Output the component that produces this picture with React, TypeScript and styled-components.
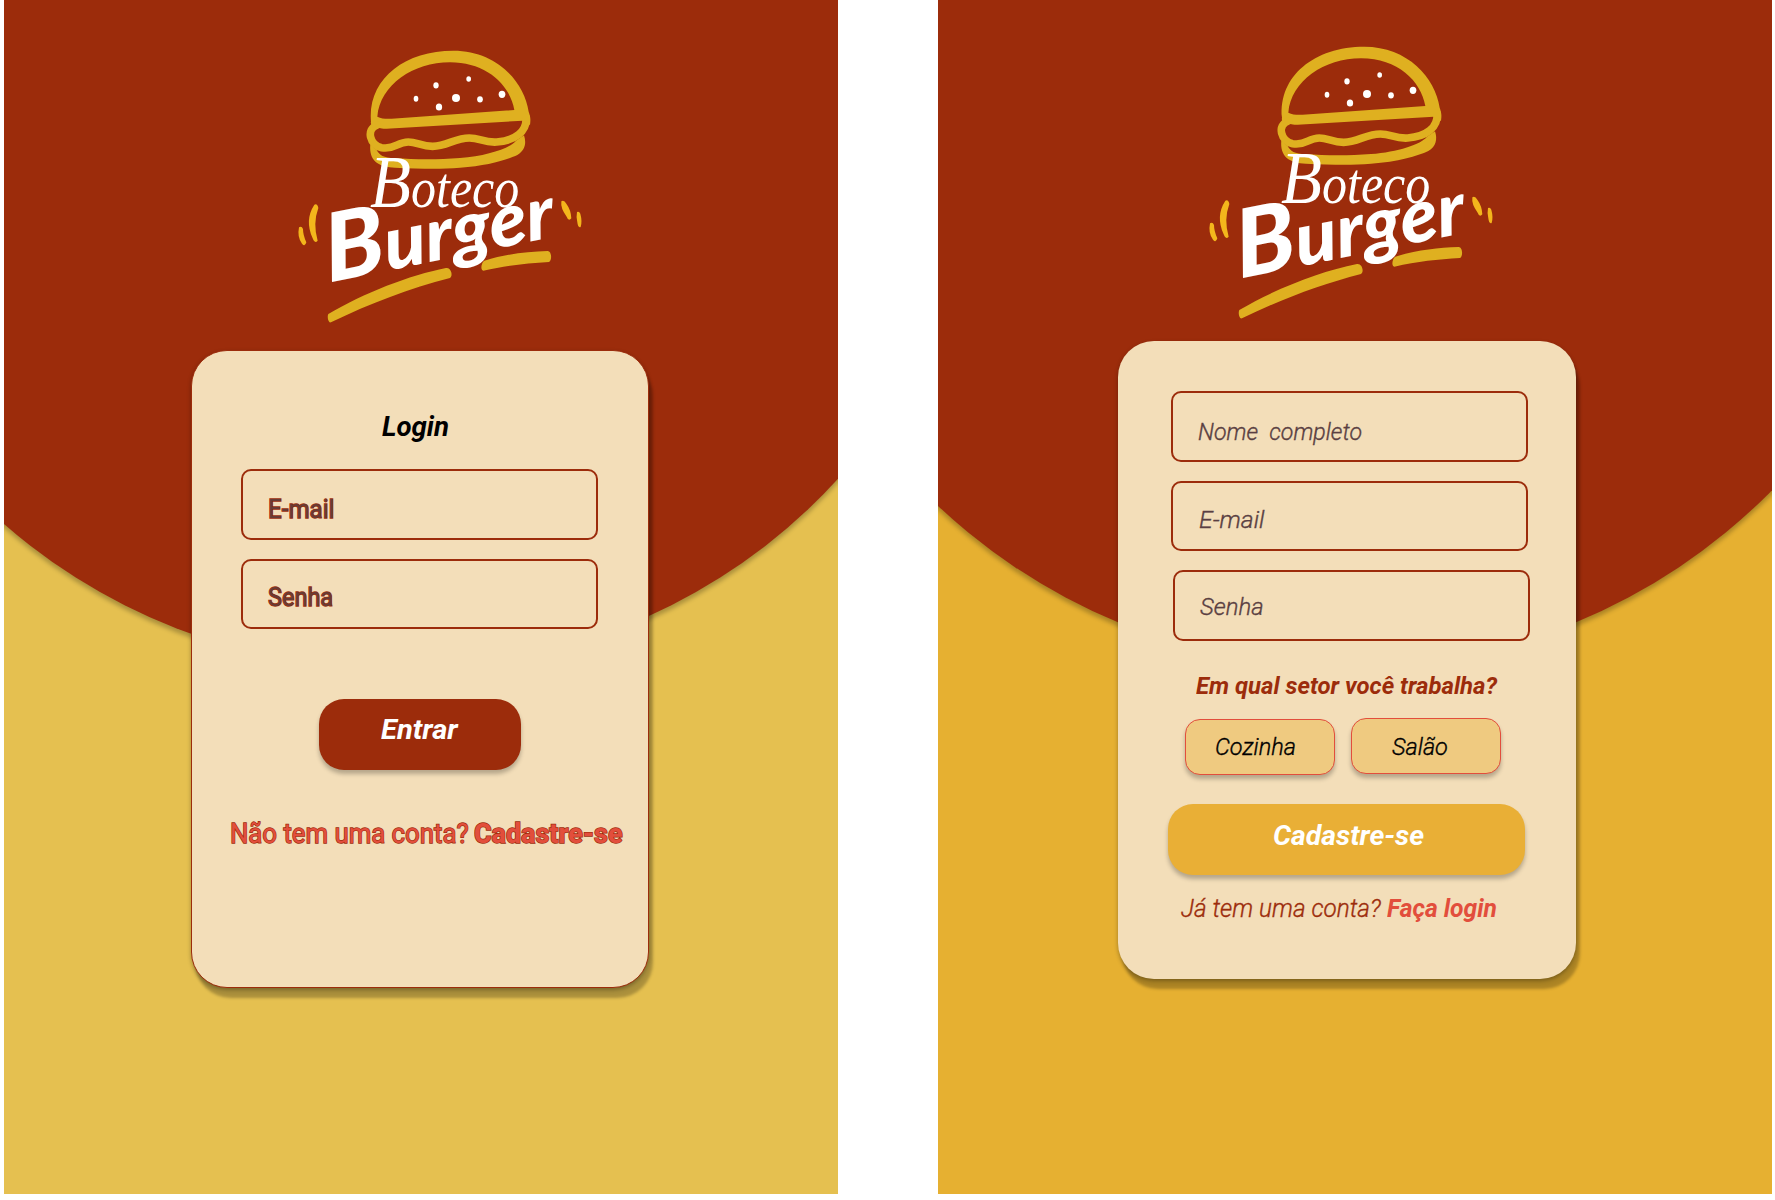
import React from 'react';
import styled, { createGlobalStyle } from 'styled-components';

const GlobalStyle = createGlobalStyle`
  *, *::before, *::after { box-sizing: border-box; }
  body { margin: 0; background: #fff; font-family: Roboto, "Liberation Sans", sans-serif; }
  button { font-family: inherit; cursor: pointer; }
`;

const brick = '#9c2c0b';
const coral = '#e24e3c';
const softShadow = '0 4px 4px rgba(0, 0, 0, 0.25)';

const Board = styled.main`
  display: flex;
  gap: 100px;
  width: 1775px;
  height: 1200px;
  padding-left: 4px;
  overflow: hidden;
`;

const Screen = styled.section<{ $bg: string; $cx: number; $cy: number; $rx: number; $ry: number }>`
  position: relative;
  isolation: isolate;
  flex: none;
  display: flex;
  flex-direction: column;
  align-items: flex-start;
  width: 834px;
  height: 1194px;
  overflow: hidden;
  background: ${p => p.$bg};

  &::before {
    content: '';
    position: absolute;
    z-index: -1;
    left: ${p => p.$cx - p.$rx}px;
    top: ${p => p.$cy - p.$ry}px;
    width: ${p => p.$rx * 2}px;
    height: ${p => p.$ry * 2}px;
    border-radius: 50%;
    background: ${brick};
    box-shadow: ${softShadow};
  }
`;

const LogoArt = styled.svg<{ $left: number; $top: number }>`
  display: block;
  flex: none;
  width: 320px;
  height: 310px;
  margin: ${p => p.$top}px 0 0 ${p => p.$left}px;
`;

const Card = styled.form<{ $left: number; $top: number; $pad: string; $outlined?: boolean }>`
  flex: none;
  display: flex;
  flex-direction: column;
  align-items: flex-start;
  width: 458px;
  height: 638px;
  margin: ${p => p.$top}px 0 0 ${p => p.$left}px;
  padding: ${p => p.$pad};
  border: ${p => (p.$outlined ? `1px solid ${brick}` : '0')};
  border-radius: 36px;
  background: #f3deb9;
  box-shadow: 0 2px 4px rgba(0, 0, 0, 0.3), 4px 10px 3px rgba(0, 0, 0, 0.25);
`;

const Copy = styled.span<{
  $size: number;
  $weight?: number;
  $italic?: boolean;
  $color?: string;
  $stretch?: number;
  $w?: number;
  $stroke?: string;
}>`
  display: block;
  flex: none;
  width: ${p => (p.$w ? `${p.$w}px` : 'max-content')};
  font-size: ${p => p.$size}px;
  font-weight: ${p => p.$weight ?? 400};
  font-style: ${p => (p.$italic ? 'italic' : 'normal')};
  line-height: 32px;
  color: ${p => p.$color ?? '#000'};
  white-space: pre;
  transform: scaleX(${p => p.$stretch ?? 1});
  transform-origin: left;
  paint-order: stroke fill;
  -webkit-text-stroke: ${p => p.$stroke ?? '0'};
`;

const outline = `1.4px ${brick}`;
const hairline = '0.35px currentColor';

const Title = styled.h1`
  display: flex;
  margin: 0 0 26px 141px;
`;

const Field = styled.label<{ $h?: number; $shift?: number; $gap?: number; $text: string }>`
  display: flex;
  width: 357px;
  height: ${p => p.$h ?? 71}px;
  margin: 0 0 ${p => p.$gap ?? 0}px ${p => p.$shift ?? 0}px;
  padding: ${p => p.$text};
  border: 2px solid ${brick};
  border-radius: 10px;
`;

const Action = styled.button<{ $w: number; $fill: string; $m: string; $pad: string }>`
  display: flex;
  align-items: flex-start;
  width: ${p => p.$w}px;
  height: 71px;
  margin: ${p => p.$m};
  padding: ${p => p.$pad};
  border: 0;
  border-radius: 25px;
  background: ${p => p.$fill};
  box-shadow: ${softShadow};
`;

const Line = styled.p<{ $m: string; $w: number }>`
  display: flex;
  justify-content: space-between;
  width: ${p => p.$w}px;
  margin: ${p => p.$m};
`;

const Link = styled.a`
  display: flex;
  text-decoration: none;
`;

const Options = styled.div`
  display: flex;
  align-items: flex-start;
  gap: 16px;
  margin-left: 14px;
`;

const Option = styled.button<{ $drop?: number; $indent: number; $lift: number }>`
  display: flex;
  align-items: flex-start;
  width: 150px;
  height: 56px;
  margin-top: ${p => p.$drop ?? 0}px;
  padding: ${p => p.$lift}px 0 0 ${p => p.$indent}px;
  border: 1px solid ${coral};
  border-radius: 15px;
  background: #efca80;
  box-shadow: ${softShadow};
`;

const seeds = [
  [408, 206, 7, 9],
  [468, 166, 8, 9.5],
  [477, 231, 9.5, 10.5],
  [528, 204, 12, 12],
  [566, 147, 7, 8],
  [600, 208, 8.5, 9.5],
  [666, 193, 10, 11],
];

function Logo({ left, top }: { left: number; top: number }) {
  return (
    <LogoArt $left={left} $top={top} viewBox="0 0 960 930" role="img" aria-label="Boteco Burger">
      <g fill="#dfb020">
        <path d="M273 275 C262 150 370 62 520 62 C650 62 733 155 746 245 C752 262 752 268 750 285 L728 272 L345 295 C315 298 298 296 290 290 C280 292 270 285 273 275 Z M292 260 C305 266 318 267 335 266 L703 240 C690 165 620 97 510 97 C400 97 300 165 292 260 Z" fillRule="evenodd" />
        <path d="M271 343 C266 392 295 412 345 413 C420 416 480 418 540 413 C620 408 680 390 712 375 C735 362 740 340 732 316 L708 332 C690 355 620 378 540 384 C470 390 400 388 345 385 C310 384 298 375 290 360 Z" />
        <path d="M145 852 C250 790 390 735 498 714 C514 712 520 738 510 744 C390 775 270 820 153 877 C144 880 141 858 145 852 Z" />
        <path d="M613 692 C680 672 740 665 803 663 C816 664 816 692 807 696 C740 700 680 706 610 722 C600 721 604 697 613 692 Z" />
      </g>
      <path d="M292 285 C256 298 270 346 305 353 C345 360 350 336 385 336 C410 336 425 349 458 349 C500 349 525 324 568 324 C600 324 610 338 650 336 C705 332 742 305 738 262" fill="none" stroke="#dfb020" strokeWidth="23" strokeLinecap="round" />
      <g fill="#f3b61c">
        <path d="M103 524 Q112 519 115 534 Q98 580 113 632 Q104 642 98 625 Q73 570 103 524 Z" />
        <path d="M57 592 Q65 587 69 597 Q69 615 79 637 Q75 652 66 641 Q51 622 57 592 Z" />
        <path d="M844 514 Q852 509 859 521 Q873 540 874 565 Q866 576 860 560 Q841 535 844 514 Z" />
        <path d="M891 546 Q900 543 902 556 Q907 575 902 591 Q894 595 892 577 Q888 560 891 546 Z" />
      </g>
      <g fill="#fff">
        {seeds.map(([cx, cy, rx, ry]) => (
          <ellipse key={cx} cx={cx} cy={cy} rx={rx} ry={ry} />
        ))}
        <text x="270" y="531" fontFamily="'Liberation Serif', serif" fontStyle="italic" fontSize="168" textLength="448" lengthAdjust="spacingAndGlyphs">
          <tspan fontSize="225">B</tspan>oteco
        </text>
        <text transform="translate(146 758) rotate(-11.5) skewX(-4)" fontFamily="Lato, sans-serif" fontStyle="italic" fontWeight="900" fontSize="222" textLength="696" lengthAdjust="spacingAndGlyphs">
          <tspan fontSize="282">B</tspan>urger
        </text>
      </g>
    </LogoArt>
  );
}

export default function App() {
  return (
    <>
      <GlobalStyle />
      <Board>
        <Screen $bg="#e5c050" $cx={394} $cy={121} $rx={580} $ry={549}>
          <Logo left={276} top={30} />
          <Card $left={187} $top={10} $outlined $pad="60px 0 0 49px">
            <Title>
              <Copy $size={28} $weight={700} $italic $stretch={0.985}>Login</Copy>
            </Title>
            <Field $gap={19} $text="23px 0 0 25px">
              <Copy $size={25} $weight={450} $color="#683c35" $stretch={0.965} $stroke={outline}>E-mail</Copy>
            </Field>
            <Field $h={70} $text="21px 0 0 25px">
              <Copy $size={25} $weight={450} $color="#683c35" $stretch={0.94} $stroke={outline}>Senha</Copy>
            </Field>
            <Action type="button" $w={202} $fill={brick} $m="70px 0 0 78px" $pad="15px 0 0 62px">
              <Copy $size={28} $weight={700} $italic $color="#fff" $stretch={1.04}>Entrar</Copy>
            </Action>
            <Line $m="48px 0 0 -11px" $w={393}>
              <Copy $size={27.5} $color={coral} $stretch={0.936} $w={238} $stroke={outline}>Não tem uma conta?</Copy>
              <Link>
                <Copy $size={27.5} $weight={800} $color={coral} $stretch={0.978} $w={149} $stroke={outline}>Cadastre-se</Copy>
              </Link>
            </Line>
          </Card>
        </Screen>
        <Screen $bg="#e6b031" $cx={409} $cy={70.5} $rx={597} $ry={597}>
          <Logo left={253} top={26} />
          <Card $left={180} $top={5} $pad="50px 0 0 53px">
            <Field $gap={19} $text="23px 0 0 25px">
              <Copy $size={24.5} $weight={350} $italic $color="#5a3f42" $stretch={0.945} $stroke={hairline}>{'Nome  completo'}</Copy>
            </Field>
            <Field $h={70} $gap={19} $text="21px 0 0 26px">
              <Copy $size={24.5} $weight={350} $italic $color="#5a3f42" $stretch={1.01} $stroke={hairline}>E-mail</Copy>
            </Field>
            <Field $shift={2} $text="19px 0 0 25px">
              <Copy $size={24.5} $weight={350} $italic $color="#5a3f42" $stretch={0.975} $stroke={hairline}>Senha</Copy>
            </Field>
            <Line $m="29px 0 16px 25px" $w={301}>
              <Copy $size={24.5} $weight={700} $italic $color={brick} $stretch={0.976} $w={301}>Em qual setor você trabalha?</Copy>
            </Line>
            <Options>
              <Option type="button" $drop={1} $indent={29} $lift={11}>
                <Copy $size={24.5} $weight={350} $italic $stretch={0.96} $stroke={hairline}>Cozinha</Copy>
              </Option>
              <Option type="button" $indent={40} $lift={12}>
                <Copy $size={24.5} $weight={350} $italic $stretch={0.96} $stroke={hairline}>Salão</Copy>
              </Option>
            </Options>
            <Action type="button" $w={357} $fill="#e9af36" $m="29px 0 0 -3px" $pad="16px 0 0 105px">
              <Copy $size={28} $weight={700} $italic $color="#fff" $stretch={1.015}>Cadastre-se</Copy>
            </Action>
            <Line $m="18px 0 0 10px" $w={316}>
              <Copy $size={25} $weight={350} $italic $color={brick} $stretch={0.972} $w={201} $stroke={hairline}>Já tem uma conta?</Copy>
              <Link>
                <Copy $size={25} $weight={700} $italic $color={coral} $stretch={0.985} $w={110}>Faça login</Copy>
              </Link>
            </Line>
          </Card>
        </Screen>
      </Board>
    </>
  );
}
